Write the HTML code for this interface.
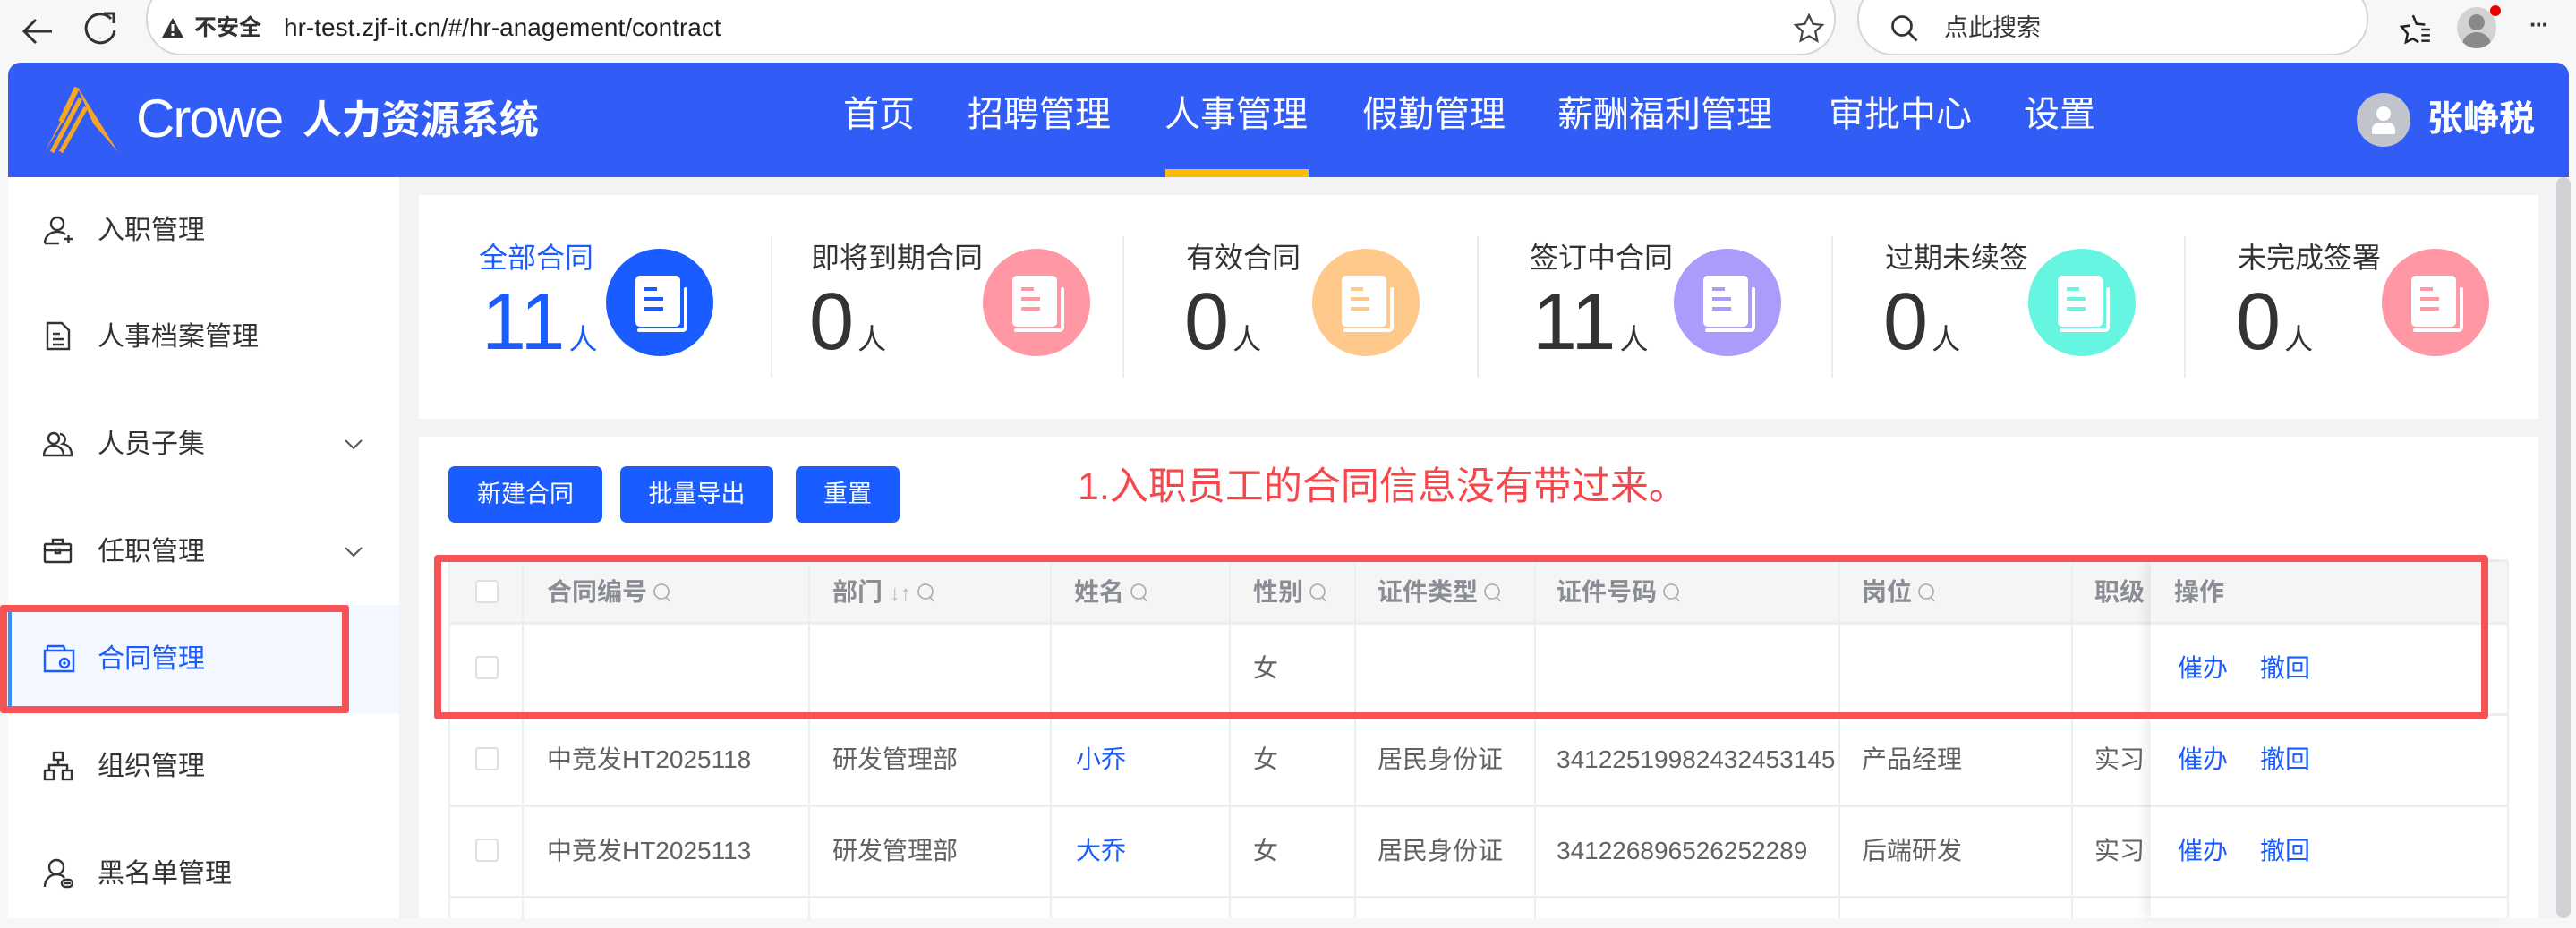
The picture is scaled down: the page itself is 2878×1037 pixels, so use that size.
<!DOCTYPE html>
<html><head><meta charset="utf-8"><style>
*{box-sizing:border-box;margin:0;padding:0}
body{width:2878px;height:1026px;overflow:hidden;background:#f7f7f7;font-family:"Liberation Sans","Noto Sans CJK SC",sans-serif;position:relative;color:#333}
.a{position:absolute}
.nav{position:absolute;top:104px;color:#fff;font-size:40px;line-height:48px;white-space:nowrap}
.si{position:absolute;left:0;width:437px;height:120px}
.si .t{position:absolute;left:109px;top:0;line-height:120px;font-size:30px;color:#333}
.si svg{position:absolute;left:48px;top:42px}
.chev{position:absolute;left:385px;top:54px}
.lab{position:absolute;top:270px;font-size:32px;line-height:36px;color:#333;white-space:nowrap}
.num{position:absolute;top:310px;font-size:90px;line-height:100px;color:#333;white-space:nowrap}
.num span{font-size:32px;margin-left:4px}
.circ{position:absolute;top:278px;width:120px;height:120px}
.div{position:absolute;top:264px;width:2px;height:158px;background:#ececec}
.btn{position:absolute;top:521px;height:63px;background:#1a5cff;color:#fff;border-radius:7px;font-size:27px;line-height:63px;text-align:center}
.th{position:absolute;top:628px;height:68px;line-height:68px;font-size:28px;font-weight:bold;color:#8a8d93;white-space:nowrap}
.td{position:absolute;font-size:28px;color:#606266;white-space:nowrap;line-height:40px}
.cb{position:absolute;left:531px;width:26px;height:26px;border:2px solid #dcdfe6;border-radius:4px;background:#fff}
.vl{position:absolute;width:2px;background:#ebeef5;top:628px;height:398px}
.hl{position:absolute;left:502px;width:2300px;height:3px;background:#ebeef5}
.q{display:inline-block;width:22px;height:24px;vertical-align:-3px;margin-left:6px}
.blue{color:#1a5cff}
</style></head><body>

<!-- browser bar -->
<svg class="a" style="left:22px;top:14px" width="42" height="42" viewBox="0 0 42 42"><path d="M36 21H6M18 8L5 21l13 13" stroke="#333" stroke-width="3" fill="none"/></svg>
<svg class="a" style="left:94px;top:12px" width="40" height="46" viewBox="0 0 40 46"><path d="M30 9A16 16 0 1 0 34 22" stroke="#333" stroke-width="3" fill="none"/><path d="M22 3h11v11" stroke="#333" stroke-width="3" fill="none"/></svg>
<div class="a" style="left:163px;top:-20px;width:1888px;height:82px;background:#fff;border:2px solid #d5d5d5;border-radius:40px"></div>
<svg class="a" style="left:180px;top:18px" width="26" height="26" viewBox="0 0 26 26"><path d="M13 2L25 24H1Z" fill="#333"/><rect x="11.5" y="9" width="3" height="8" fill="#fff"/><rect x="11.5" y="19" width="3" height="3" fill="#fff"/></svg>
<div class="a" style="left:217px;top:14px;font-size:25px;font-weight:bold;line-height:34px;color:#333">不安全</div>
<div class="a" style="left:317px;top:13px;font-size:28px;line-height:36px;color:#222">hr-test.zjf-it.cn/#/hr-anagement/contract</div>
<svg class="a" style="left:2003px;top:14px" width="36" height="36" viewBox="0 0 24 24"><path d="M12 2l3 6.5 7 .8-5.2 4.8 1.4 7L12 17.6 5.8 21l1.4-7L2 9.3l7-.8z" stroke="#444" stroke-width="1.5" fill="none"/></svg>
<div class="a" style="left:2075px;top:-20px;width:571px;height:82px;background:#fff;border:2px solid #d5d5d5;border-radius:40px"></div>
<svg class="a" style="left:2110px;top:14px" width="36" height="36" viewBox="0 0 24 24"><circle cx="10" cy="10" r="7" stroke="#333" stroke-width="1.8" fill="none"/><path d="M15 15l6 6" stroke="#333" stroke-width="1.8"/></svg>
<div class="a" style="left:2172px;top:13px;font-size:27px;line-height:36px;color:#333">点此搜索</div>
<svg class="a" style="left:2680px;top:14px" width="38" height="38" viewBox="0 0 24 24"><path d="M10 2l2.5 6 6 .5M14 21l-4-2.5L5 21l1.2-6L2 10l6-.8" stroke="#222" stroke-width="1.6" fill="none"/><path d="M16 12h6M16 16h6M16 20h6" stroke="#222" stroke-width="1.6"/></svg>
<div class="a" style="left:2745px;top:8px;width:44px;height:46px;border-radius:50%;background:#d3d3d3;overflow:hidden"><div class="a" style="left:13px;top:8px;width:18px;height:18px;border-radius:50%;background:#8a8a8a"></div><div class="a" style="left:6px;top:28px;width:32px;height:28px;border-radius:50%;background:#8a8a8a"></div></div>
<div class="a" style="left:2782px;top:6px;width:12px;height:12px;border-radius:50%;background:#e00"></div>
<div class="a" style="left:2826px;top:12px;font-size:26px;color:#333;font-weight:bold;letter-spacing:-2px">···</div>

<!-- header -->
<div class="a" style="left:9px;top:70px;width:2861px;height:128px;background:#315cf6;border-radius:14px 14px 0 0"></div>
<svg class="a" style="left:46px;top:96px" width="90" height="76" viewBox="0 0 90 76"><path d="M40 0L86 74L58 42Z" fill="#f5a623"/><path d="M40 4L30 30L4 74Z" fill="#f5a623"/><path d="M44 14L12 74" stroke="#f5a623" stroke-width="5"/><path d="M50 24L22 74" stroke="#f5a623" stroke-width="5"/><path d="M40 2L22 40" stroke="#f5a623" stroke-width="6"/></svg>
<div class="a" style="left:152px;top:98px;font-size:60px;line-height:70px;color:#fff;letter-spacing:-2px">Crowe</div>
<div class="a" style="left:338px;top:110px;font-size:44px;line-height:50px;color:#fff;font-weight:bold">人力资源系统</div>
<div class="nav" style="left:942px">首页</div>
<div class="nav" style="left:1081px">招聘管理</div>
<div class="nav" style="left:1301px">人事管理</div>
<div class="a" style="left:1302px;top:189px;width:160px;height:9px;background:#fbbc05"></div>
<div class="nav" style="left:1522px">假勤管理</div>
<div class="nav" style="left:1740px">薪酬福利管理</div>
<div class="nav" style="left:2043px">审批中心</div>
<div class="nav" style="left:2261px">设置</div>
<div class="a" style="left:2633px;top:104px;width:60px;height:60px;border-radius:50%;background:#c1c4cc"><div class="a" style="left:22px;top:15px;width:16px;height:16px;border-radius:50%;background:#fff"></div><div class="a" style="left:17px;top:33px;width:26px;height:13px;border-radius:8px 8px 2px 2px;background:#fff"></div></div>
<div class="a" style="left:2712px;top:108px;font-size:40px;line-height:50px;color:#fff;font-weight:bold">张峥税</div>

<!-- content bg -->
<div class="a" style="left:9px;top:198px;width:2861px;height:828px;background:#f2f3f5"></div>
<div class="a" style="left:2856px;top:198px;width:16px;height:828px;background:#d0d1d4;border-radius:8px"></div>

<!-- sidebar -->
<div class="a" style="left:9px;top:198px;width:437px;height:828px;background:#fff"></div>
<div class="si" style="top:198px"><svg width="34" height="34" viewBox="0 0 34 34" fill="none" stroke="#333" stroke-width="2.4"><circle cx="16" cy="10" r="7"/><path d="M2 32c0-8 6-13 14-13 4 0 7 1 9 3M2 32h16M24 27h9M28.5 23v9"/></svg><div class="t">入职管理</div></div>
<div class="si" style="top:317px"><svg width="34" height="34" viewBox="0 0 34 34" fill="none" stroke="#333" stroke-width="2.4"><path d="M5 2h16l8 8v21H5z"/><path d="M11 14h8M11 20h12M11 26h12"/></svg><div class="t">人事档案管理</div></div>
<div class="si" style="top:437px"><svg width="34" height="34" viewBox="0 0 34 34" fill="none" stroke="#333" stroke-width="2.4"><circle cx="12" cy="11" r="6"/><path d="M1 30c0-7 5-11 11-11s11 4 11 11zM19 6a6 6 0 0 1 3 11c6 1 10 5 10 13h-9"/></svg><div class="t">人员子集</div><svg class="chev" style="left:385px;top:54px" width="20" height="12" viewBox="0 0 20 12"><path d="M1 1l9 9 9-9" stroke="#555" stroke-width="2" fill="none"/></svg></div>
<div class="si" style="top:557px"><svg width="34" height="34" viewBox="0 0 34 34" fill="none" stroke="#333" stroke-width="2.4"><rect x="2" y="9" width="29" height="20" rx="1"/><path d="M11 9V4h11v5M2 16h29M14 15h5v4h-5z"/></svg><div class="t">任职管理</div><svg class="chev" style="left:385px;top:54px" width="20" height="12" viewBox="0 0 20 12"><path d="M1 1l9 9 9-9" stroke="#555" stroke-width="2" fill="none"/></svg></div>
<div class="a" style="left:9px;top:676px;width:437px;height:121px;background:#f3f7ff"></div>
<div class="a" style="left:9px;top:681px;width:4px;height:112px;background:#3b8cff"></div>
<div class="si" style="top:677px"><svg width="36" height="34" viewBox="0 0 36 34" fill="none" stroke="#1a5cff" stroke-width="2.4"><path d="M2 8h32v23H2zM5 8V3h18l2 5"/><circle cx="24" cy="22" r="5"/><path d="M24 20v4M22 22h4" stroke-width="1.5"/></svg><div class="t" style="color:#1a5cff">合同管理</div></div>
<div class="si" style="top:797px"><svg width="34" height="34" viewBox="0 0 34 34" fill="none" stroke="#333" stroke-width="2.4"><rect x="12" y="2" width="10" height="8"/><rect x="2" y="22" width="10" height="10"/><rect x="22" y="22" width="10" height="10"/><path d="M17 10v6M7 22v-6h20v6"/></svg><div class="t">组织管理</div></div>
<div class="si" style="top:917px"><svg width="34" height="34" viewBox="0 0 34 34" fill="none" stroke="#333" stroke-width="2.4"><circle cx="15" cy="10" r="8"/><path d="M2 32c0-8 6-14 13-14 4 0 7 1 9 4"/><rect x="21" y="24" width="12" height="8" rx="4"/><path d="M23 28h8"/></svg><div class="t">黑名单管理</div></div>
<div class="a" style="left:0;top:676px;width:390px;height:121px;border:8px solid #f65454;border-radius:3px"></div>

<!-- stats card -->
<div class="a" style="left:468px;top:218px;width:2368px;height:250px;background:#fff"></div>
<div class="div" style="left:861px"></div><div class="div" style="left:1254px"></div><div class="div" style="left:1650px"></div><div class="div" style="left:2046px"></div><div class="div" style="left:2440px"></div>

<div class="lab" style="left:535px;color:#1a5cff">全部合同</div>
<div class="num" style="left:538px;color:#1a5cff">11<span>人</span></div>
<div class="lab" style="left:906px">即将到期合同</div>
<div class="num" style="left:904px">0<span>人</span></div>
<div class="lab" style="left:1325px">有效合同</div>
<div class="num" style="left:1323px">0<span>人</span></div>
<div class="lab" style="left:1709px">签订中合同</div>
<div class="num" style="left:1712px">11<span>人</span></div>
<div class="lab" style="left:2106px">过期未续签</div>
<div class="num" style="left:2104px">0<span>人</span></div>
<div class="lab" style="left:2500px">未完成签署</div>
<div class="num" style="left:2498px">0<span>人</span></div>

<svg class="circ" style="left:677px" viewBox="0 0 120 120"><circle cx="60" cy="60" r="60" fill="#1a5cff"/><path d="M89 45V87Q89 91 85 91H37" stroke="#fff" stroke-width="4" fill="none" stroke-linecap="round"/><rect x="33" y="30" width="50" height="57" rx="5" fill="#fff"/><path d="M43 45h14M43 56h21M43 67h21" stroke="#1a5cff" stroke-width="4"/></svg>
<svg class="circ" style="left:1098px" viewBox="0 0 120 120"><circle cx="60" cy="60" r="60" fill="#ff97a4"/><path d="M89 45V87Q89 91 85 91H37" stroke="#fff" stroke-width="4" fill="none" stroke-linecap="round"/><rect x="33" y="30" width="50" height="57" rx="5" fill="#fff"/><path d="M43 45h14M43 56h21M43 67h21" stroke="#ff97a4" stroke-width="4"/></svg>
<svg class="circ" style="left:1466px" viewBox="0 0 120 120"><circle cx="60" cy="60" r="60" fill="#ffc98c"/><path d="M89 45V87Q89 91 85 91H37" stroke="#fff" stroke-width="4" fill="none" stroke-linecap="round"/><rect x="33" y="30" width="50" height="57" rx="5" fill="#fff"/><path d="M43 45h14M43 56h21M43 67h21" stroke="#ffc98c" stroke-width="4"/></svg>
<svg class="circ" style="left:1870px" viewBox="0 0 120 120"><circle cx="60" cy="60" r="60" fill="#a99cfb"/><path d="M89 45V87Q89 91 85 91H37" stroke="#fff" stroke-width="4" fill="none" stroke-linecap="round"/><rect x="33" y="30" width="50" height="57" rx="5" fill="#fff"/><path d="M43 45h14M43 56h21M43 67h21" stroke="#a99cfb" stroke-width="4"/></svg>
<svg class="circ" style="left:2266px" viewBox="0 0 120 120"><circle cx="60" cy="60" r="60" fill="#66f5e0"/><path d="M89 45V87Q89 91 85 91H37" stroke="#fff" stroke-width="4" fill="none" stroke-linecap="round"/><rect x="33" y="30" width="50" height="57" rx="5" fill="#fff"/><path d="M43 45h14M43 56h21M43 67h21" stroke="#66f5e0" stroke-width="4"/></svg>
<svg class="circ" style="left:2661px" viewBox="0 0 120 120"><circle cx="60" cy="60" r="60" fill="#ff97a4"/><path d="M89 45V87Q89 91 85 91H37" stroke="#fff" stroke-width="4" fill="none" stroke-linecap="round"/><rect x="33" y="30" width="50" height="57" rx="5" fill="#fff"/><path d="M43 45h14M43 56h21M43 67h21" stroke="#ff97a4" stroke-width="4"/></svg>

<!-- table card -->
<div class="a" style="left:468px;top:488px;width:2368px;height:538px;background:#fff"></div>
<div class="btn" style="left:501px;width:172px">新建合同</div>
<div class="btn" style="left:693px;width:171px">批量导出</div>
<div class="btn" style="left:889px;width:116px">重置</div>
<div class="a" style="left:1204px;top:516px;font-size:43px;line-height:56px;color:#f5474c;white-space:nowrap">1.入职员工的合同信息没有带过来。</div>

<div class="a" style="left:502px;top:628px;width:2300px;height:68px;background:#f5f5f5"></div>
<div class="hl" style="top:625px"></div>
<div class="hl" style="top:695px"></div>
<div class="hl" style="top:797px"></div>
<div class="hl" style="top:899px"></div>
<div class="hl" style="top:1001px"></div>
<div class="vl" style="left:501px"></div><div class="vl" style="left:583px"></div><div class="vl" style="left:903px"></div><div class="vl" style="left:1173px"></div><div class="vl" style="left:1373px"></div><div class="vl" style="left:1513px"></div><div class="vl" style="left:1714px"></div><div class="vl" style="left:2054px"></div><div class="vl" style="left:2314px"></div><div class="vl" style="left:2801px"></div>

<div class="cb" style="top:648px;background:#fff"></div>
<div class="th" style="left:611px">合同编号<svg class="q" viewBox="0 0 22 24"><circle cx="10" cy="11" r="8" stroke="#aaa" stroke-width="1.6" fill="none"/><path d="M15 17l4 5" stroke="#aaa" stroke-width="1.6"/></svg></div>
<div class="th" style="left:930px">部门 <span style="font-weight:normal;color:#bbb;font-size:24px">↓↑</span><svg class="q" viewBox="0 0 22 24"><circle cx="10" cy="11" r="8" stroke="#aaa" stroke-width="1.6" fill="none"/><path d="M15 17l4 5" stroke="#aaa" stroke-width="1.6"/></svg></div>
<div class="th" style="left:1200px">姓名<svg class="q" viewBox="0 0 22 24"><circle cx="10" cy="11" r="8" stroke="#aaa" stroke-width="1.6" fill="none"/><path d="M15 17l4 5" stroke="#aaa" stroke-width="1.6"/></svg></div>
<div class="th" style="left:1400px">性别<svg class="q" viewBox="0 0 22 24"><circle cx="10" cy="11" r="8" stroke="#aaa" stroke-width="1.6" fill="none"/><path d="M15 17l4 5" stroke="#aaa" stroke-width="1.6"/></svg></div>
<div class="th" style="left:1539px">证件类型<svg class="q" viewBox="0 0 22 24"><circle cx="10" cy="11" r="8" stroke="#aaa" stroke-width="1.6" fill="none"/><path d="M15 17l4 5" stroke="#aaa" stroke-width="1.6"/></svg></div>
<div class="th" style="left:1739px">证件号码<svg class="q" viewBox="0 0 22 24"><circle cx="10" cy="11" r="8" stroke="#aaa" stroke-width="1.6" fill="none"/><path d="M15 17l4 5" stroke="#aaa" stroke-width="1.6"/></svg></div>
<div class="th" style="left:2080px">岗位<svg class="q" viewBox="0 0 22 24"><circle cx="10" cy="11" r="8" stroke="#aaa" stroke-width="1.6" fill="none"/><path d="M15 17l4 5" stroke="#aaa" stroke-width="1.6"/></svg></div>
<div class="th" style="left:2340px">职级</div>

<!-- rows -->
<div class="cb" style="top:733px"></div>
<div class="td" style="left:1400px;top:727px">女</div>
<div class="cb" style="top:835px"></div>
<div class="td" style="left:611px;top:829px">中竞发HT2025118</div>
<div class="td" style="left:930px;top:829px">研发管理部</div>
<div class="td blue" style="left:1202px;top:829px">小乔</div>
<div class="td" style="left:1400px;top:829px">女</div>
<div class="td" style="left:1539px;top:829px">居民身份证</div>
<div class="td" style="left:1739px;top:829px">34122519982432453145</div>
<div class="td" style="left:2080px;top:829px">产品经理</div>
<div class="td" style="left:2340px;top:829px">实习</div>
<div class="cb" style="top:937px"></div>
<div class="td" style="left:611px;top:931px">中竞发HT2025113</div>
<div class="td" style="left:930px;top:931px">研发管理部</div>
<div class="td blue" style="left:1202px;top:931px">大乔</div>
<div class="td" style="left:1400px;top:931px">女</div>
<div class="td" style="left:1539px;top:931px">居民身份证</div>
<div class="td" style="left:1739px;top:931px">341226896526252289</div>
<div class="td" style="left:2080px;top:931px">后端研发</div>
<div class="td" style="left:2340px;top:931px">实习</div>

<!-- fixed ops column -->
<div class="a" style="left:2403px;top:628px;width:398px;height:398px;background:#fff;box-shadow:-8px 0 10px rgba(0,0,0,0.06)"></div>
<div class="a" style="left:2403px;top:628px;width:398px;height:68px;background:#f5f5f5"></div>
<div class="a" style="left:2403px;top:695px;width:398px;height:3px;background:#ebeef5"></div>
<div class="a" style="left:2403px;top:797px;width:398px;height:3px;background:#ebeef5"></div>
<div class="a" style="left:2403px;top:899px;width:398px;height:3px;background:#ebeef5"></div>
<div class="a" style="left:2403px;top:1001px;width:398px;height:3px;background:#ebeef5"></div>
<div class="th" style="left:2429px">操作</div>
<div class="td blue" style="left:2433px;top:727px">催办</div><div class="td blue" style="left:2525px;top:727px">撤回</div>
<div class="td blue" style="left:2433px;top:829px">催办</div><div class="td blue" style="left:2525px;top:829px">撤回</div>
<div class="td blue" style="left:2433px;top:931px">催办</div><div class="td blue" style="left:2525px;top:931px">撤回</div>

<!-- red box -->
<div class="a" style="left:485px;top:620px;width:2295px;height:184px;border:8px solid #f65454;border-radius:4px"></div>
</body></html>
